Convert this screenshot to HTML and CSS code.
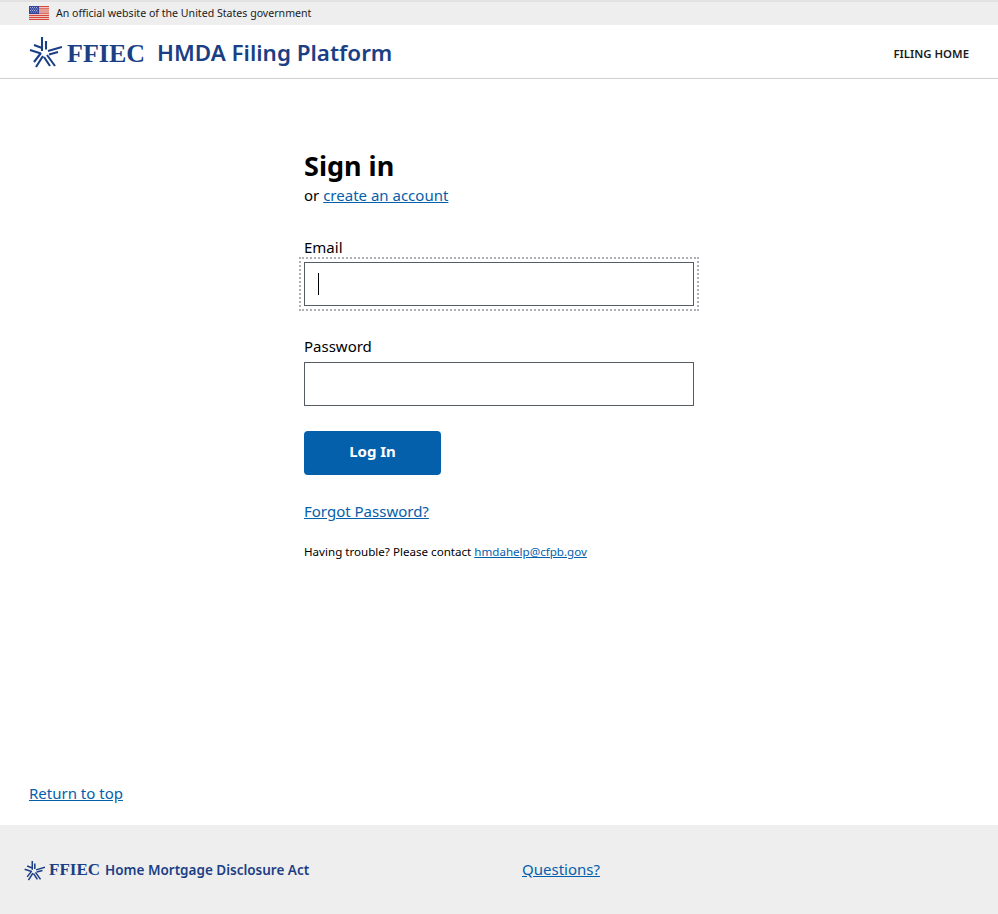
FILE: index.html
```html
<!DOCTYPE html>
<html lang="en">
<head>
  <meta charset="UTF-8" />
  <title>HMDA Filing Platform - Sign in</title>
  <meta name="viewport" content="width=device-width, initial-scale=1.0" />
  <link rel="stylesheet" href="styles.css">
</head>
<body>

  <div class="gov-banner">
    <svg class="flag" viewBox="0 0 20 14" width="20" height="14" aria-hidden="true">
      <rect width="20" height="14" fill="#f4f1ef" />
      <path d="M0 .6h20M0 2.800h20M0 5h20M0 7.200h20M0 9.400h20M0 11.400h20M0 13.400h20" stroke="#d8473c" stroke-width="1.200" />
      <rect width="10" height="8" fill="#34459c" />
      <path d="M1 1.500h8M1.800 3h7M1 4.500h8M1.800 6h7" stroke="#dfe3f5" stroke-width=".7" stroke-dasharray="1 1" />
    </svg>
    <span>An official website of the United States government</span>
  </div>

  <header class="site-header">
    <a class="brand" href="#">
      <svg class="star" viewBox="0 0 33 32" width="33" height="32" aria-hidden="true">
        <path fill="none" stroke="#1b3f85" stroke-width="2.100" d="M13 1V15M17 5V13.500M33 11L19 15M29 16L20 18.500M26 30L18 19M21 30L15 21M7 31L14 20M5 26L12 17M1 14L12 17.500M5 9L13 12" />
      </svg>
      <span class="ffiec">FFIEC</span>
      <span class="brand-title">HMDA Filing Platform</span>
    </a>
    <nav><a class="nav-link" href="#">FILING HOME</a></nav>
  </header>

  <main class="main">
    <div class="signin">
      <h1>Sign in</h1>
      <p class="sub">or <a href="#">create an account</a></p>

      <form class="login-form" onsubmit="return false">
        <label for="email">Email</label>
        <div class="focus-ring">
          <div class="field fake-focus" id="email"><span class="caret"></span></div>
        </div>

        <label for="password" class="label-pass">Password</label>
        <input class="field" type="password" id="password" />

        <button class="btn-login">Log In</button>
      </form>

      <p class="forgot"><a href="#">Forgot Password?</a></p>
      <p class="trouble">Having trouble? Please contact <a href="#">hmdahelp@cfpb.gov</a></p>
    </div>
  </main>

  <div class="return-top"><a href="#">Return to top</a></div>

  <footer class="site-footer">
    <div class="foot-brand">
      <svg class="star" viewBox="0 0 33 32" width="21" height="21" aria-hidden="true">
        <path fill="none" stroke="#1b3f85" stroke-width="2.400" d="M13 1V15M17 5V13.500M33 11L19 15M29 16L20 18.500M26 30L18 19M21 30L15 21M7 31L14 20M5 26L12 17M1 14L12 17.500M5 9L13 12" />
      </svg>
      <span class="ffiec small">FFIEC</span>
      <span class="foot-title">Home Mortgage Disclosure Act</span>
    </div>
    <a class="questions" href="#">Questions?</a>
  </footer>

</body>
</html>
```

FILE: styles.css
```css
:root {
  --navy: #1b3f85;
  --link: #0560ab;
  --grey: #eeeeee;
}

html, body {
  height: 100%;
}

body {
  margin: 0;
  display: flex;
  flex-direction: column;
  min-height: 914px;
  font-family: "Noto Sans", sans-serif;
  font-size: 15px;
  color: #000;
  background: #fff;
}

a {
  color: var(--link);
}

p {
  margin: 0;
}

.gov-banner {
  height: 25px;
  box-sizing: border-box;
  border-top: 2px solid #e2e2e2;
  background: var(--grey);
  padding: 0 0 2px 29px;
  display: flex;
  align-items: center;
  gap: 7px;
  font-size: 10.6px;
  color: #1b1b1b;
}

.site-header {
  height: 54px;
  box-sizing: border-box;
  border-bottom: 1px solid #cfcfcf;
  padding: 0 29px;
  display: flex;
  align-items: center;
  justify-content: space-between;
}

.brand {
  display: flex;
  align-items: center;
  text-decoration: none;
}

.star {
  margin-top: 1px;
}

.ffiec {
  font-family: "Liberation Serif", serif;
  font-weight: bold;
  font-size: 26px;
  color: var(--navy);
  margin-left: 5px;
  padding-top: 5px;
}

.brand-title {
  font-size: 22.400px;
  font-weight: 600;
  color: var(--navy);
  margin-left: 12px;
  padding-top: 2px;
}

.nav-link {
  font-size: 11.400px;
  font-weight: 600;
  color: #1b1b1b;
  text-decoration: none;
}

.main {
  flex: 1;
  padding-left: 304px;
}

.signin {
  width: 390px;
  padding-top: 71px;
}

h1 {
  margin: 0;
  font-size: 27px;
  line-height: 32px;
  font-weight: 700;
}

.sub {
  margin-top: 2px;
  line-height: 22px;
}

.login-form {
  margin-top: 30px;
  display: flex;
  flex-direction: column;
  align-items: flex-start;
}

label {
  line-height: 22px;
  height: 22px;
}

.label-pass {
  margin-top: 29px;
  margin-bottom: 5px;
}

.focus-ring {
  outline: 2px dotted #aeb0b5;
  outline-offset: 3px;
  margin-top: 4px;
}

.field {
  display: block;
  width: 390px;
  height: 44px;
  box-sizing: border-box;
  border: 1px solid #565c65;
  background: #fff;
  padding: 0 13px;
  margin: 0;
}

.fake-focus {
  display: flex;
  align-items: center;
}

.caret {
  width: 1px;
  height: 22px;
  background: #000;
}

.btn-login {
  margin-top: 25px;
  width: 137px;
  height: 44px;
  padding: 0 0 4px;
  border: none;
  border-radius: 4px;
  background: var(--link);
  color: #fff;
  font-family: inherit;
  font-size: 15px;
  font-weight: 700;
  cursor: pointer;
}

.forgot {
  margin-top: 25px;
  line-height: 22px;
}

.trouble {
  margin-top: 22px;
  font-size: 11.600px;
  line-height: 16px;
}

.return-top {
  padding: 0 29px 20px;
  line-height: 24px;
}

.site-footer {
  height: 89px;
  box-sizing: border-box;
  background: var(--grey);
  padding-left: 24px;
  display: flex;
  align-items: center;
}

.foot-brand {
  width: 498px;
  display: flex;
  align-items: center;
}

.ffiec.small {
  font-size: 17px;
  margin-left: 4px;
  padding-top: 1px;
}

.foot-title {
  font-size: 13.500px;
  font-weight: 600;
  color: var(--navy);
  margin-left: 5px;
}

.questions {
  margin-bottom: 2px;
}
```
